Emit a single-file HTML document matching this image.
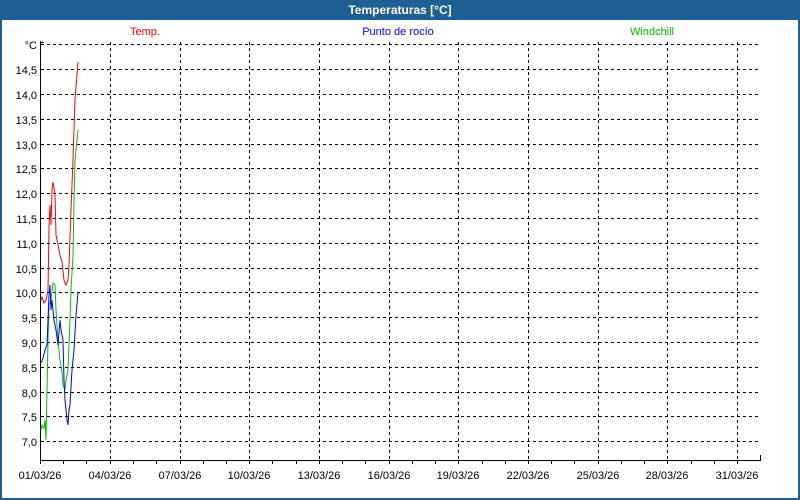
<!DOCTYPE html>
<html><head><meta charset="utf-8"><style>
html,body{margin:0;padding:0;width:800px;height:500px;overflow:hidden;background:#fff}
#w{position:absolute;left:0;top:0;width:796px;height:498px;border:2px solid #1e5f94;border-top:none;border-bottom-width:2px;background:#fff}
#t{position:absolute;left:0;top:0;width:800px;height:20px;background:#1e5f94;color:#fff;font:bold 12px "Liberation Sans",sans-serif;text-align:center;line-height:20px}
svg{position:absolute;left:0;top:0}
text{font-family:"Liberation Sans",sans-serif;font-size:11px}
</style></head><body>
<div id="w"></div>
<div id="t">Temperaturas [°C]</div>
<svg width="800" height="500" viewBox="0 0 800 500">
<g stroke="#000" stroke-dasharray="3,3" stroke-width="1">
<line x1="41" x2="760" y1="44.5" y2="44.5"/><line x1="41" x2="760" y1="69.5" y2="69.5"/><line x1="41" x2="760" y1="94.5" y2="94.5"/><line x1="41" x2="760" y1="119.5" y2="119.5"/><line x1="41" x2="760" y1="144.5" y2="144.5"/><line x1="41" x2="760" y1="168.5" y2="168.5"/><line x1="41" x2="760" y1="193.5" y2="193.5"/><line x1="41" x2="760" y1="218.5" y2="218.5"/><line x1="41" x2="760" y1="243.5" y2="243.5"/><line x1="41" x2="760" y1="268.5" y2="268.5"/><line x1="41" x2="760" y1="292.5" y2="292.5"/><line x1="41" x2="760" y1="317.5" y2="317.5"/><line x1="41" x2="760" y1="342.5" y2="342.5"/><line x1="41" x2="760" y1="367.5" y2="367.5"/><line x1="41" x2="760" y1="392.5" y2="392.5"/><line x1="41" x2="760" y1="416.5" y2="416.5"/><line x1="41" x2="760" y1="441.5" y2="441.5"/>
<line y1="42" y2="460" x1="110.5" x2="110.5"/><line y1="42" y2="460" x1="180.5" x2="180.5"/><line y1="42" y2="460" x1="249.5" x2="249.5"/><line y1="42" y2="460" x1="319.5" x2="319.5"/><line y1="42" y2="460" x1="389.5" x2="389.5"/><line y1="42" y2="460" x1="458.5" x2="458.5"/><line y1="42" y2="460" x1="528.5" x2="528.5"/><line y1="42" y2="460" x1="598.5" x2="598.5"/><line y1="42" y2="460" x1="667.5" x2="667.5"/><line y1="42" y2="460" x1="737.5" x2="737.5"/>
</g>
<g stroke="#000" stroke-width="1" fill="none">
<path d="M40.5 41V460.5H760.5V455M40 42.5H44"/>
<path d="M63.5 460v4M86.5 460v4M110.5 460v4M133.5 460v4M156.5 460v4M180.5 460v4M203.5 460v4M226.5 460v4M249.5 460v4M272.5 460v4M296.5 460v4M319.5 460v4M342.5 460v4M365.5 460v4M389.5 460v4M412.5 460v4M435.5 460v4M458.5 460v4M482.5 460v4M505.5 460v4M528.5 460v4M551.5 460v4M574.5 460v4M598.5 460v4M621.5 460v4M644.5 460v4M667.5 460v4M691.5 460v4M714.5 460v4M737.5 460v4M40.5 460v4"/>
</g>
<polyline fill="none" stroke="#00c000" points="41,430 42,425 44,428 45,420 46,440 47,390 48,340 49,305 51,300 53,283 55,285 56,310 58,340 60,360 62,372 63,385 65,390 66,380 68,370 70,320 71,290 73,255 74,200 75,160 77,140 78,130"/>
<polyline fill="none" stroke="#0000ff" points="41,363 43,358 45,350 47,345 48,320 49,295 50,285 51,310 52,300 54,320 56,330 58,345 60,320 61,330 63,340 64,380 65,400 67,420 68,425 69,410 70,405 72,370 74,350 76,315 78,293 79,292"/>
<polyline fill="none" stroke="#ff0000" points="41,300 42,297 44,303 46,300 48,290 49,227 50,205 51,225 52,190 53,182 55,195 56,235 58,245 60,255 62,262 64,280 65,283 66,285 68,280 69,265 71,210 73,160 75,100 78,62"/>
<text x="145" y="35" fill="#ff0000" text-anchor="middle">Temp.</text>
<text x="398" y="35" fill="#0000ff" text-anchor="middle">Punto de rocío</text>
<text x="652" y="35" fill="#00c000" text-anchor="middle">Windchill</text>
<g text-anchor="end" fill="#000">
<text x="37" y="49">°C</text><text x="37" y="74">14,5</text><text x="37" y="99">14,0</text><text x="37" y="124">13,5</text><text x="37" y="149">13,0</text><text x="37" y="173">12,5</text><text x="37" y="198">12,0</text><text x="37" y="223">11,5</text><text x="37" y="248">11,0</text><text x="37" y="273">10,5</text><text x="37" y="297">10,0</text><text x="37" y="322">9,5</text><text x="37" y="347">9,0</text><text x="37" y="372">8,5</text><text x="37" y="397">8,0</text><text x="37" y="421">7,5</text><text x="37" y="446">7,0</text>
</g>
<g text-anchor="middle" fill="#000">
<text x="40" y="479">01/03/26</text><text x="110" y="479">04/03/26</text><text x="180" y="479">07/03/26</text><text x="249" y="479">10/03/26</text><text x="319" y="479">13/03/26</text><text x="389" y="479">16/03/26</text><text x="458" y="479">19/03/26</text><text x="528" y="479">22/03/26</text><text x="598" y="479">25/03/26</text><text x="667" y="479">28/03/26</text><text x="737" y="479">31/03/26</text>
</g>
</svg>
</body></html>
